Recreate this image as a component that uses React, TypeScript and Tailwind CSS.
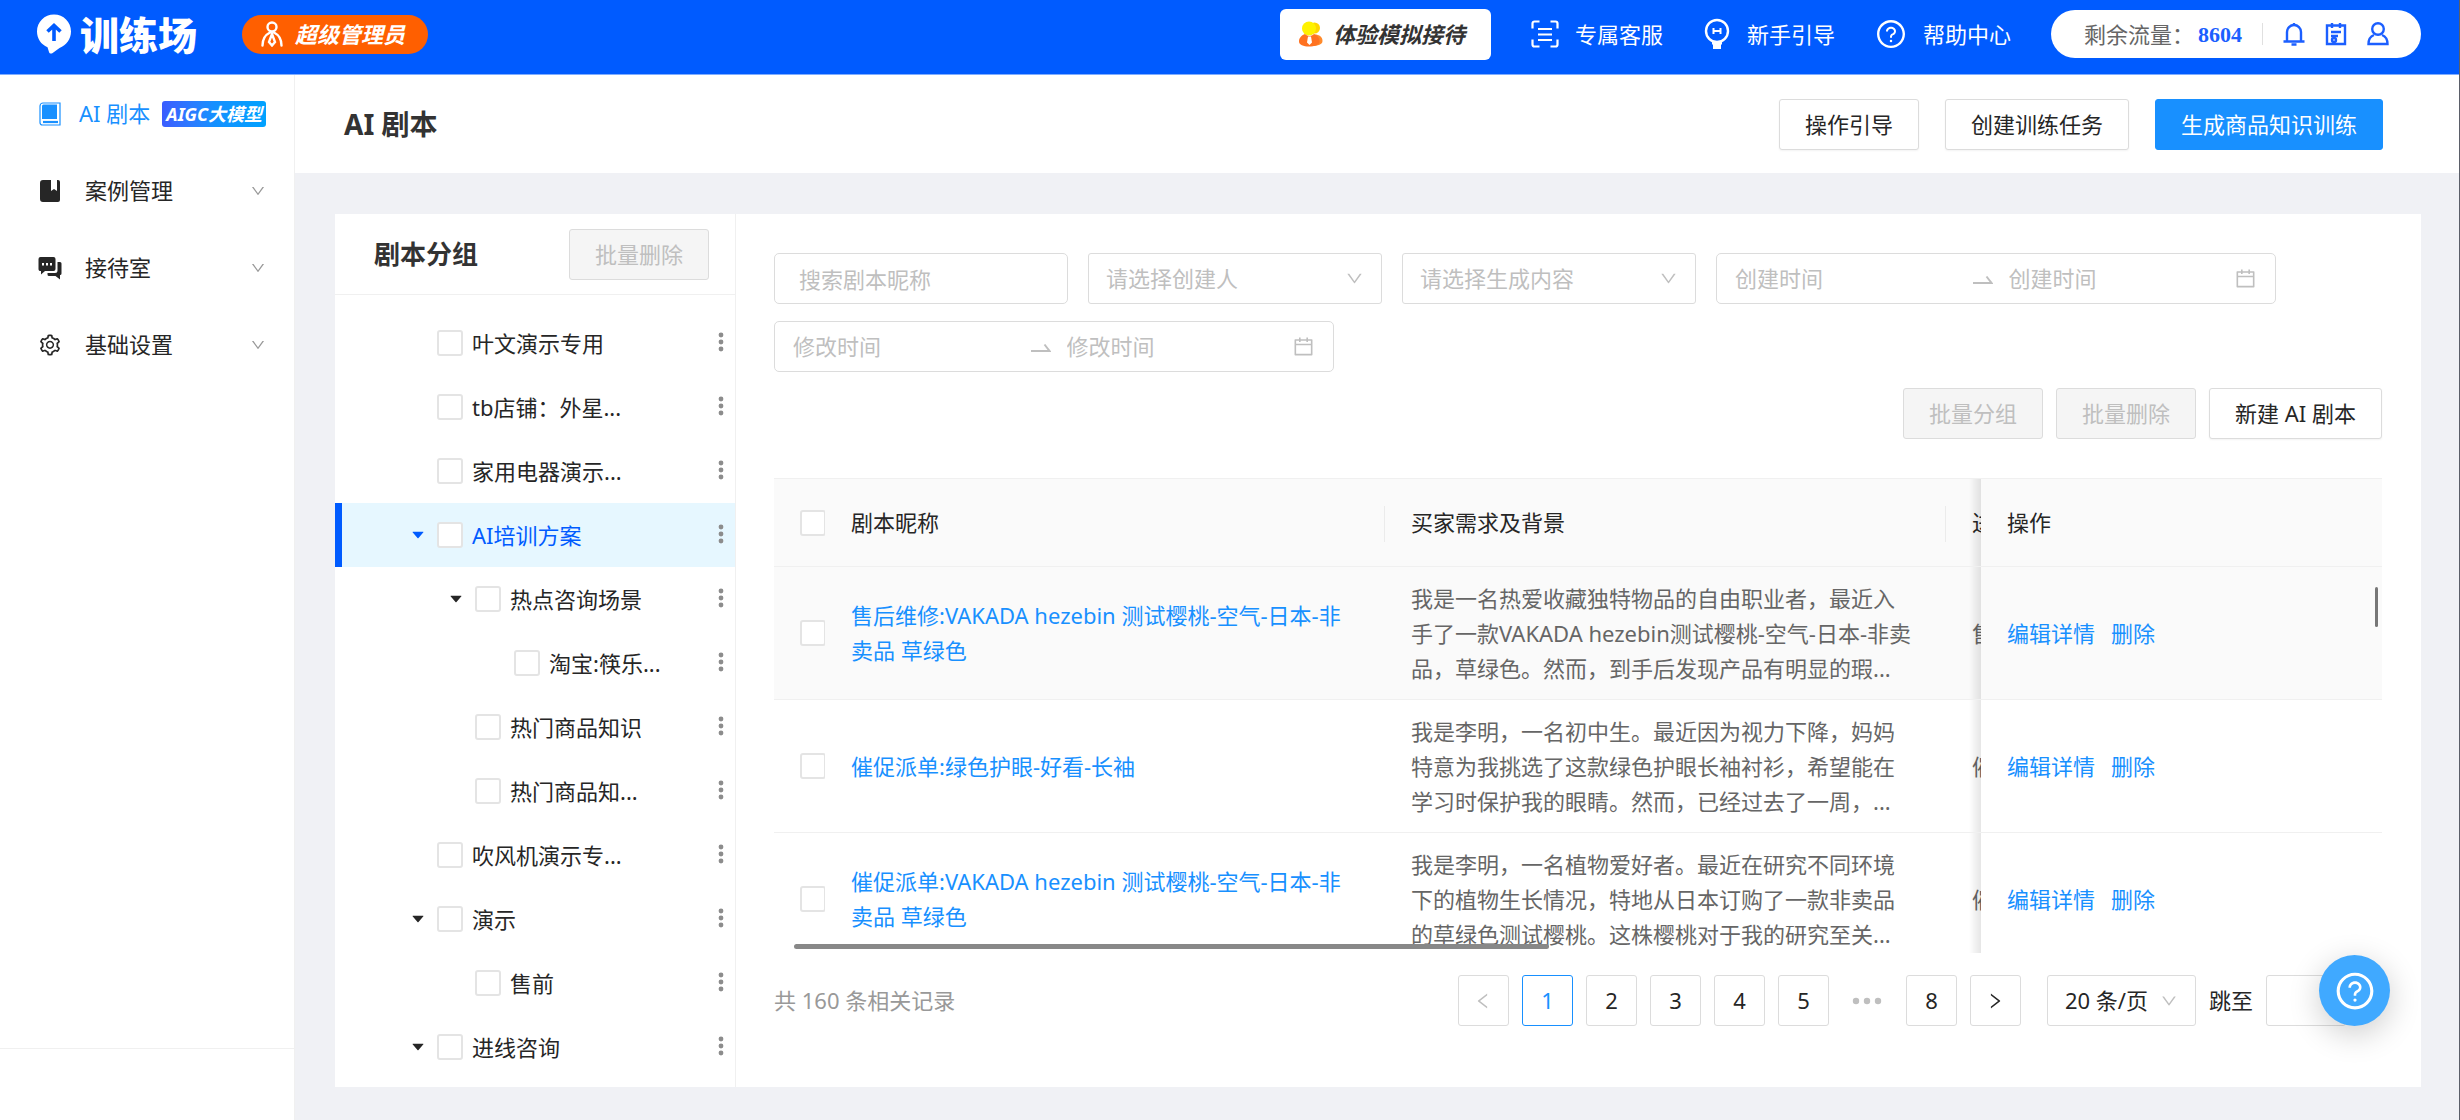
import { ReactNode } from "react";
import {
   AiFillCaretDown,
   AiOutlineCalendar,
   AiOutlineDown,
   AiOutlineLeft,
   AiOutlineQuestionCircle,
   AiOutlineRight,
   AiOutlineSetting,
} from "react-icons/ai";

type TreeItem = {
   name: string;
   level: number;
   open?: boolean;
   active?: boolean;
};

const tree: TreeItem[] = [
   { name: "叶文演示专用", level: 0 },
   { name: "tb店铺：外星...", level: 0 },
   { name: "家用电器演示...", level: 0 },
   { name: "AI培训方案", level: 0, open: true, active: true },
   { name: "热点咨询场景", level: 1, open: true },
   { name: "淘宝:筷乐...", level: 2 },
   { name: "热门商品知识", level: 1 },
   { name: "热门商品知...", level: 1 },
   { name: "吹风机演示专...", level: 0 },
   { name: "演示", level: 0, open: true },
   { name: "售前", level: 1 },
   { name: "进线咨询", level: 0, open: true },
];

const scripts = [
   {
      name: "售后维修:VAKADA hezebin 测试樱桃-空气-日本-非卖品 草绿色",
      background:
         "我是一名热爱收藏独特物品的自由职业者，最近入手了一款VAKADA hezebin测试樱桃-空气-日本-非卖品，草绿色。然而，到手后发现产品有明显的瑕...",
      type: "售",
      hover: true,
   },
   {
      name: "催促派单:绿色护眼-好看-长袖",
      background:
         "我是李明，一名初中生。最近因为视力下降，妈妈特意为我挑选了这款绿色护眼长袖衬衫，希望能在学习时保护我的眼睛。然而，已经过去了一周，...",
      type: "催",
   },
   {
      name: "催促派单:VAKADA hezebin 测试樱桃-空气-日本-非卖品 草绿色",
      background:
         "我是李明，一名植物爱好者。最近在研究不同环境下的植物生长情况，特地从日本订购了一款非卖品的草绿色测试樱桃。这株樱桃对于我的研究至关...",
      type: "催",
   },
];

const indent = ["pl-[64px]", "pl-[102px]", "pl-[141px]"];

const checkbox =
   "appearance-none block shrink-0 size-[26px] rounded-[3px] border-2 border-[#e4e4e4] bg-white checked:bg-[#1890ff]";

const fixedCell =
   "sticky right-0 w-[401px] pl-[26px] before:absolute before:inset-y-0 before:-left-3 before:w-3 before:bg-linear-to-r before:from-transparent before:to-black/10";

function Button({
   children,
   disabled,
   primary,
}: {
   children: ReactNode;
   disabled?: boolean;
   primary?: boolean;
}) {
   const color = primary
      ? "bg-[#1890ff] border-[#1890ff] text-white"
      : disabled
        ? "bg-[#f5f5f5] border-[#dcdcdc] text-[#bfbfbf]"
        : "bg-white border-[#dcdcdc] text-[#262626] shadow-xs";

   return (
      <button
         disabled={disabled}
         className={`h-[51px] px-[25px] border rounded-[3px] whitespace-nowrap ${color}`}
      >
         {children}
      </button>
   );
}

function HeaderLink({ icon, children }: { icon: ReactNode; children: string }) {
   return (
      <a href="#" className="flex items-center gap-4 text-white">
         {icon}
         {children}
      </a>
   );
}

function Header() {
   return (
      <header className="flex items-center justify-between h-[75px] pb-1.5 pl-9 pr-[38px] bg-[#005bff] border-b border-[#7fadff]">
         <div className="flex items-center">
            <svg width="36" height="40" viewBox="0 0 36 40" fill="none">
               <path
                  d="M18 0.5C8.5 0.5 1 8 1 17.5c0 7 4 13 10.500 15.700l1.500 4.800c.4 1.500 2 2 3.300 1.200l7.200-5.200C30.500 31 35 25 35 17.500 35 8 27.500 .5 18 .5Z"
                  fill="#fff"
               />
               <path
                  d="M18 27V12M11.500 17.500 18 11.500l6.500 6"
                  stroke="#005bff"
                  strokeWidth="3.600"
               />
            </svg>
            <span className="ml-2 text-[39px] leading-none font-black text-white">
               训练场
            </span>
            <span className="flex items-center gap-3 h-[39px] ml-[45px] pl-[19px] pr-[23px] rounded-full bg-[#ff5f00] text-white font-bold italic">
               <svg
                  width="22"
                  height="26"
                  viewBox="0 0 22 26"
                  fill="none"
                  stroke="#fff"
                  strokeWidth="2.400"
                  strokeLinecap="round"
               >
                  <circle cx="11" cy="6" r="4.500" />
                  <path d="M1.500 24.500C1.500 18 5 13.500 9 11.500M20.500 24.500C20.500 18 17 13.500 13 11.500M11 13l-3 8 3 3.500 3-3.500Z" />
               </svg>
               超级管理员
            </span>
         </div>

         <div className="flex items-center gap-10">
            <button className="flex items-center gap-2.5 h-[51px] px-[19px] pr-[26px] rounded-md bg-white text-[#333] font-bold italic">
               <svg width="24" height="26" viewBox="0 0 24 26">
                  <circle cx="15.500" cy="7" r="5.500" fill="#ffd500" />
                  <path d="M13 25c6 0 10.500-1.500 10.500-5 0-4-3-6.500-8-6.500Z" fill="#ff8a2b" />
                  <circle cx="10" cy="7.500" r="7" fill="#fff200" />
                  <path
                     d="M0 20.500c0-4 3-6.500 6-7.500 2.500 2.500 6.500 2.500 9 0 3.500 1.500 5.500 4 5.500 7.500 0 3.500-5 5-10.500 5S0 24 0 20.500Z"
                     fill="#ff7220"
                  />
                  <path d="M9 15.500h3l1 6-2.500 2.500L8 21.500Z" fill="#fff" />
               </svg>
               体验模拟接待
            </button>
            <HeaderLink
               icon={
                  <svg
                     width="28"
                     height="28"
                     viewBox="0 0 28 28"
                     fill="none"
                     stroke="#fff"
                     strokeWidth="2.200"
                  >
                     <path d="M8.500 1.500h-5a2 2 0 0 0-2 2v5M19.500 1.500h5a2 2 0 0 1 2 2v5M8.500 26.500h-5a2 2 0 0 1-2-2v-5M19.500 26.500h5a2 2 0 0 0 2-2v-5M7 9h14M7 14.500h14M7 20h14" />
                  </svg>
               }
            >
               专属客服
            </HeaderLink>
            <HeaderLink
               icon={
                  <svg
                     width="28"
                     height="32"
                     viewBox="0 0 28 32"
                     fill="none"
                     stroke="#fff"
                     strokeWidth="2.400"
                  >
                     <circle cx="14" cy="13" r="11" />
                     <path d="M10.500 10v6M17.500 10v6M10.500 13h7" strokeWidth="2" />
                     <path d="M9 23h10v3l-1 1v4h-8v-4l-1-1Z" fill="#fff" stroke="none" />
                  </svg>
               }
            >
               新手引导
            </HeaderLink>
            <HeaderLink icon={<AiOutlineQuestionCircle size={32} />}>
               帮助中心
            </HeaderLink>
            <div className="flex items-center h-12 pl-[33px] pr-8 rounded-full bg-white text-[#1c5fff]">
               <span className="text-[#666]">剩余流量：</span>
               <span className="ml-1 font-['Liberation_Serif',serif] font-bold">
                  8604
               </span>
               <span className="w-px h-[22px] mx-5 bg-[#e0e0e0]" />
               <div className="flex gap-5">
                  <svg
                     width="22"
                     height="24"
                     viewBox="0 0 22 24"
                     fill="none"
                     stroke="currentColor"
                     strokeWidth="2.400"
                  >
                     <path d="M4 19.500V10a7 7 0 0 1 14 0v9.500M0.500 19.500h21M8.500 22.500h5M11 3V1" />
                  </svg>
                  <svg
                     width="22"
                     height="24"
                     viewBox="0 0 22 24"
                     fill="none"
                     stroke="currentColor"
                     strokeWidth="2.400"
                  >
                     <path d="M2 3.500h18V22H2ZM7 1v5M15 1v5M6 10h10M6 14h7" />
                     <circle cx="9" cy="18" r="2" />
                  </svg>
                  <svg
                     width="22"
                     height="24"
                     viewBox="0 0 22 24"
                     fill="none"
                     stroke="currentColor"
                     strokeWidth="2.400"
                  >
                     <circle cx="11" cy="7" r="5.800" />
                     <path d="M7 13c-4 1.500-5.500 5-5.500 9h19c0-4-1.500-7.500-5.500-9" />
                  </svg>
               </div>
            </div>
         </div>
      </header>
   );
}

function MenuItem({ icon, children }: { icon: ReactNode; children: string }) {
   return (
      <a href="#" className="flex items-center h-[77px] pl-[38px] pr-7 text-[#262626]">
         <span className="w-6">{icon}</span>
         <span className="ml-[23px] flex-1">{children}</span>
         <AiOutlineDown size={16} className="text-[#999]" />
      </a>
   );
}

function Sidebar() {
   return (
      <aside className="flex flex-col w-[295px] shrink-0 bg-white border-r border-[#f0f0f0]">
         <nav className="flex-1">
            <a href="#" className="flex items-center h-[77px] pl-[38px] pr-7 text-[#1890ff]">
               <svg width="24" height="24" viewBox="0 0 24 24" fill="none">
                  <path
                     d="M5 1h17v22H4.500a2.500 2.500 0 0 1-2.500-2.500V4A3 3 0 0 1 5 1Z"
                     stroke="#1890ff"
                     strokeWidth="1.200"
                  />
                  <path d="M5.500 2.500H19V17H4V4a1.500 1.500 0 0 1 1.500-1.500Z" fill="#1890ff" />
                  <path d="M5 20h15" stroke="#1890ff" strokeWidth="2.200" />
               </svg>
               <span className="ml-[17px] flex-1 whitespace-nowrap">AI 剧本</span>
               <span className="h-[26px] px-1 rounded-[3px] bg-linear-to-r from-[#3a5cff] via-[#1490ff] to-[#00a2ff] text-white text-[18px] leading-[26px] font-bold italic">
                  AIGC大模型
               </span>
            </a>
            <MenuItem
               icon={
                  <svg width="24" height="24" viewBox="0 0 24 24" fill="#262626">
                     <path d="M5 1h8v11l3-2 3 2V1h1a2 2 0 0 1 2 2v18a2 2 0 0 1-2 2H5a3 3 0 0 1-3-3V4a3 3 0 0 1 3-3Z" />
                  </svg>
               }
            >
               案例管理
            </MenuItem>
            <MenuItem
               icon={
                  <svg width="24" height="24" viewBox="0 0 24 24" fill="#262626">
                     <path d="M2.500 1h13A2 2 0 0 1 17.500 3v10a2 2 0 0 1-2 2H7l-4 3.500V15a2 2 0 0 1-2.500-2V3a2 2 0 0 1 2-2Z" />
                     <path d="M19.500 6H22a1.500 1.500 0 0 1 1.500 1.500v10A1.500 1.500 0 0 1 22 19v4.500L17.500 20H11a1.500 1.500 0 0 1-1.500-1.500V17H17a2.500 2.500 0 0 0 2.500-2.500Z" />
                     <path d="M4 7h2v2.500H4ZM8 7h2v2.500H8ZM12 7h2v2.500h-2Z" fill="#fff" />
                  </svg>
               }
            >
               接待室
            </MenuItem>
            <MenuItem icon={<AiOutlineSetting size={24} />}>基础设置</MenuItem>
         </nav>
         <div className="h-[72px] border-t border-[#f0f0f0]" />
      </aside>
   );
}

function GroupPanel() {
   return (
      <section className="w-[401px] shrink-0 border-r border-[#f0f0f0]">
         <div className="flex items-center justify-between h-[81px] pl-[39px] pr-[26px] border-b border-[#f0f0f0]">
            <h2 className="text-[26px] font-bold text-[#333]">剧本分组</h2>
            <Button disabled>批量删除</Button>
         </div>
         <ul className="pt-4">
            {tree.map((item, index) => (
               <li
                  key={index}
                  className={`relative flex items-center h-16 pr-2 ${indent[item.level]} ${
                     item.active ? "bg-[#e6f7ff] text-[#005bff]" : "text-[#262626]"
                  }`}
               >
                  {item.active && (
                     <span className="absolute left-0 inset-y-0 w-[7px] bg-[#005bff]" />
                  )}
                  <span className="flex justify-center w-[38px]">
                     {item.open && <AiFillCaretDown size={16} />}
                  </span>
                  <label className="flex items-center gap-[9px] flex-1">
                     <input type="checkbox" className={checkbox} />
                     {item.name}
                  </label>
                  <button aria-label={item.name}>
                     <svg width="12" height="22" viewBox="0 0 12 22" fill="#8c8c8c">
                        <circle cx="6" cy="3" r="2.400" />
                        <circle cx="6" cy="10" r="2.400" />
                        <circle cx="6" cy="17" r="2.400" />
                     </svg>
                  </button>
               </li>
            ))}
         </ul>
      </section>
   );
}

function FilterSelect({ placeholder }: { placeholder: string }) {
   return (
      <div className="relative w-[294px]">
         <select
            aria-label={placeholder}
            className="appearance-none w-full h-[51px] px-[17px] border border-[#dcdcdc] rounded-[3px] text-[#bfbfbf]"
         >
            <option>{placeholder}</option>
         </select>
         <AiOutlineDown
            size={19}
            className="absolute right-[18px] top-4 text-[#bfbfbf] pointer-events-none"
         />
      </div>
   );
}

function DateRange({ placeholder }: { placeholder: string }) {
   const input = "w-0 flex-1 outline-none placeholder:text-[#bfbfbf]";

   return (
      <div className="flex items-center w-[560px] h-[51px] px-[18px] border border-[#dcdcdc] rounded-[5px] text-[#bfbfbf]">
         <input aria-label={placeholder} placeholder={placeholder} className={input} />
         <svg
            width="20"
            height="20"
            viewBox="0 0 20 20"
            fill="none"
            stroke="currentColor"
            strokeWidth="2"
            className="ml-3 mr-4"
         >
            <path d="M0 14h18.500L13.500 7.500" />
         </svg>
         <input aria-label={placeholder} placeholder={placeholder} className={input} />
         <AiOutlineCalendar size={23} />
      </div>
   );
}

function ScriptTable() {
   const th =
      "relative h-[89px] pl-[26px] text-left font-normal bg-[#fafafa] border-y border-[#f0f0f0]";
   const divider =
      "after:absolute after:right-0 after:top-[27px] after:h-9 after:w-px after:bg-[#ebebeb]";

   return (
      <div className="relative mt-[39px]">
         <div className="h-[475px] overflow-hidden">
            <table className="w-[2400px] table-fixed border-separate border-spacing-0 text-[#262626]">
               <thead>
                  <tr>
                     <th className={`${th} w-[51px]`}>
                        <input type="checkbox" aria-label="剧本昵称" className={checkbox} />
                     </th>
                     <th className={`${th} ${divider} w-[560px]`}>剧本昵称</th>
                     <th className={`${th} ${divider} w-[561px]`}>买家需求及背景</th>
                     <th className={th}>进</th>
                     <th
                        className={`h-[89px] text-left font-normal bg-[#fafafa] border-y border-[#f0f0f0] ${fixedCell}`}
                     >
                        操作
                     </th>
                  </tr>
               </thead>
               <tbody>
                  {scripts.map((script, index) => {
                     const bg = script.hover ? "bg-[#fafafa]" : "bg-white";
                     const td = `h-[133px] border-b border-[#f0f0f0] leading-[35px] ${bg}`;

                     return (
                        <tr key={index}>
                           <td className={`${td} pl-[26px]`}>
                              <input
                                 type="checkbox"
                                 aria-label={script.name}
                                 className={checkbox}
                              />
                           </td>
                           <td className={`${td} pl-[26px] pr-8`}>
                              <a href="#" className="text-[#1890ff]">
                                 {script.name}
                              </a>
                           </td>
                           <td className={`${td} pl-[26px] pr-8 text-[#666]`}>
                              {script.background}
                           </td>
                           <td className={`${td} pl-[26px] text-[#666]`}>{script.type}</td>
                           <td className={`${td} ${fixedCell}`}>
                              <div className="flex gap-4 text-[#1890ff]">
                                 <a href="#">编辑详情</a>
                                 <a href="#">删除</a>
                              </div>
                           </td>
                        </tr>
                     );
                  })}
               </tbody>
            </table>
         </div>
         {/* scrollbar thumbs */}
         <span className="absolute left-5 bottom-1 w-[755px] h-[5px] rounded-full bg-[#888]" />
         <span className="absolute right-1 top-[109px] w-[3px] h-10 rounded-full bg-[#777]" />
      </div>
   );
}

function Pagination() {
   const item =
      "flex items-center justify-center size-[51px] border border-[#dcdcdc] rounded-[3px] text-[#262626]";

   return (
      <div className="flex items-center mt-[22px]">
         <span className="flex-1 text-[#999]">共 160 条相关记录</span>
         <nav className="flex gap-[13px]">
            <button disabled aria-label="上一页" className={item}>
               <AiOutlineLeft size={20} className="text-[#bfbfbf]" />
            </button>
            <button className="size-[51px] border border-[#1890ff] rounded-[3px] text-[#1890ff]">
               1
            </button>
            {[2, 3, 4, 5].map((page) => (
               <button key={page} className={item}>
                  {page}
               </button>
            ))}
            <span className="flex items-center justify-center size-[51px]">
               <svg width="30" height="8" viewBox="0 0 30 8" fill="#bfbfbf">
                  <circle cx="4" cy="4" r="3.200" />
                  <circle cx="15" cy="4" r="3.200" />
                  <circle cx="26" cy="4" r="3.200" />
               </svg>
            </span>
            <button className={item}>8</button>
            <button aria-label="下一页" className={item}>
               <AiOutlineRight size={20} />
            </button>
         </nav>
         <div className="relative ml-[26px]">
            <select
               aria-label="20 条/页"
               className="appearance-none w-[149px] h-[51px] pl-[17px] border border-[#dcdcdc] rounded-[3px] text-[#262626]"
            >
               <option>20 条/页</option>
            </select>
            <AiOutlineDown
               size={18}
               className="absolute right-[18px] top-[17px] text-[#bfbfbf] pointer-events-none"
            />
         </div>
         <label className="flex items-center gap-[13px] ml-[13px] mr-9 text-[#262626]">
            跳至
            <input className="w-20 h-[51px] px-3 border border-[#dcdcdc] rounded-[3px]" />
         </label>
      </div>
   );
}

export default function App() {
   return (
      <div className="flex flex-col min-h-screen bg-[#f0f1f5] border-r border-[#5b5f69] text-[22px] leading-[35px] font-['Noto_Sans','Noto_Sans_CJK_SC',sans-serif]">
         <Header />
         <div className="flex flex-1">
            <Sidebar />
            <main className="flex flex-col flex-1 min-w-0">
               <div className="flex items-center h-[98px] pl-[49px] pr-[76px] bg-white">
                  <h1 className="flex-1 text-[28px] font-bold text-[#333]">AI 剧本</h1>
                  <div className="flex gap-[26px]">
                     <Button>操作引导</Button>
                     <Button>创建训练任务</Button>
                     <Button primary>生成商品知识训练</Button>
                  </div>
               </div>
               <div className="flex flex-1 mt-[41px] ml-10 mr-[38px] mb-[33px] bg-white">
                  <GroupPanel />
                  <section className="flex-1 min-w-0 pl-[38px] pr-[39px] pt-[39px]">
                     <div className="flex flex-wrap gap-x-5 gap-y-[17px]">
                        <input
                           aria-label="搜索剧本昵称"
                           placeholder="搜索剧本昵称"
                           className="w-[294px] h-[51px] px-6 border border-[#dcdcdc] rounded-[5px] placeholder:text-[#bfbfbf]"
                        />
                        <FilterSelect placeholder="请选择创建人" />
                        <FilterSelect placeholder="请选择生成内容" />
                        <DateRange placeholder="创建时间" />
                        <DateRange placeholder="修改时间" />
                     </div>
                     <div className="flex justify-end gap-[13px] mt-4">
                        <Button disabled>批量分组</Button>
                        <Button disabled>批量删除</Button>
                        <Button>新建 AI 剧本</Button>
                     </div>
                     <ScriptTable />
                     <Pagination />
                  </section>
               </div>
            </main>
         </div>
         <button
            aria-label="帮助中心"
            className="fixed right-[70px] bottom-[94px] flex items-center justify-center size-[71px] rounded-full bg-[#40a9ff] text-white shadow-[0_8px_32px_rgba(0,0,0,0.2)]"
         >
            <AiOutlineQuestionCircle size={42} />
         </button>
      </div>
   );
}
